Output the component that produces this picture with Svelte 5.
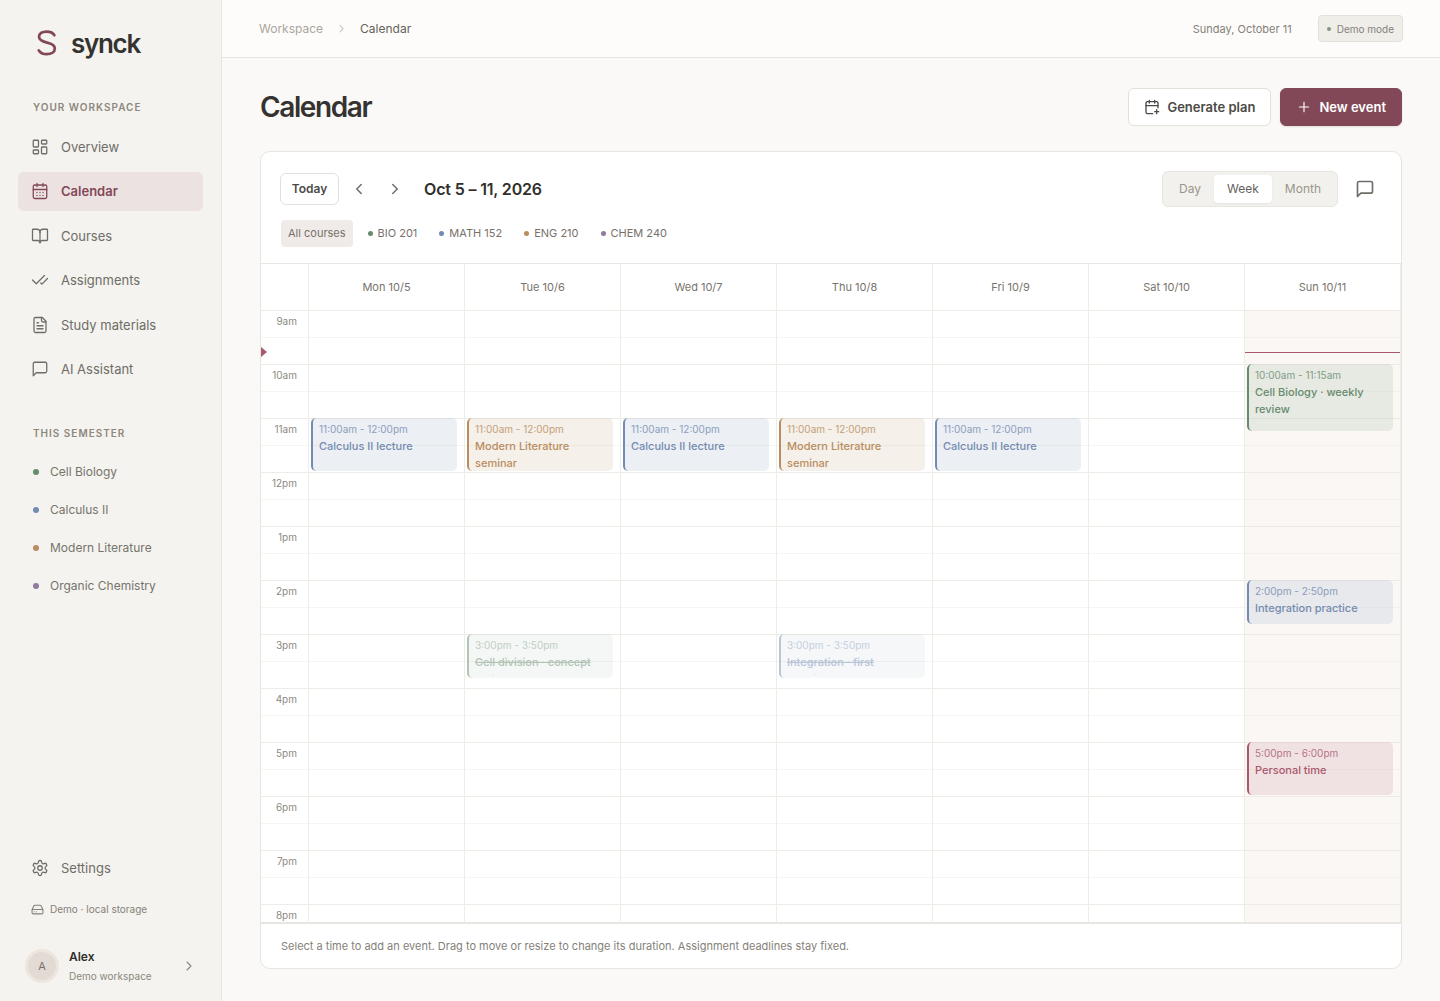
<script>
  const nav = [
    { label: 'Overview', icon: 'overview' },
    { label: 'Calendar', icon: 'calendar', active: true },
    { label: 'Courses', icon: 'book' },
    { label: 'Assignments', icon: 'checks' },
    { label: 'Study materials', icon: 'file' },
    { label: 'AI Assistant', icon: 'message' }
  ];

  const courses = [
    { name: 'Cell Biology', code: 'BIO 201', color: 'green' },
    { name: 'Calculus II', code: 'MATH 152', color: 'blue' },
    { name: 'Modern Literature', code: 'ENG 210', color: 'orange' },
    { name: 'Organic Chemistry', code: 'CHEM 240', color: 'purple' }
  ];

  const calculus = { start: 660, end: 720, time: '11:00am - 12:00pm', title: 'Calculus II lecture', color: 'blue' };
  const literature = { start: 660, end: 720, time: '11:00am - 12:00pm', title: 'Modern Literature seminar', color: 'orange' };

  const days = [
    { label: 'Mon 10/5', events: [calculus] },
    {
      label: 'Tue 10/6',
      events: [
        literature,
        { start: 900, end: 950, time: '3:00pm - 3:50pm', title: 'Cell division · concept review', color: 'green', done: true }
      ]
    },
    { label: 'Wed 10/7', events: [calculus] },
    {
      label: 'Thu 10/8',
      events: [
        literature,
        { start: 900, end: 950, time: '3:00pm - 3:50pm', title: 'Integration · first practice', color: 'blue', done: true }
      ]
    },
    { label: 'Fri 10/9', events: [calculus] },
    { label: 'Sat 10/10', events: [] },
    {
      label: 'Sun 10/11',
      today: true,
      events: [
        { start: 600, end: 675, time: '10:00am - 11:15am', title: 'Cell Biology · weekly review', color: 'green' },
        { start: 840, end: 890, time: '2:00pm - 2:50pm', title: 'Integration practice', color: 'blue' },
        { start: 1020, end: 1080, time: '5:00pm - 6:00pm', title: 'Personal time', color: 'red' }
      ]
    }
  ];

  const hours = ['9am', '10am', '11am', '12pm', '1pm', '2pm', '3pm', '4pm', '5pm', '6pm', '7pm', '8pm'];
  const views = ['Day', 'Week', 'Month'];
  const dayStart = 540;
  const now = 587;

  let view = $state('Week');
  let filter = $state('all');

  // 54px per hour
  function offset(minutes) {
    return Math.round(((minutes - dayStart) * 54) / 60);
  }

  function eventStyle(e) {
    return `top: ${offset(e.start)}px; height: ${offset(e.end) - offset(e.start) - 1}px`;
  }
</script>

{#snippet icon(name, size = 18, width = 1.7)}
  <svg width={size} height={size} viewBox="0 0 24 24" fill="none" stroke="currentColor" stroke-width={width} stroke-linecap="round" stroke-linejoin="round" aria-hidden="true">
    {#if name === 'overview'}
      <rect x="3" y="3" width="7" height="9" rx="1" />
      <rect x="14" y="3" width="7" height="5" rx="1" />
      <rect x="14" y="12" width="7" height="9" rx="1" />
      <rect x="3" y="16" width="7" height="5" rx="1" />
    {:else if name === 'calendar'}
      <rect x="3" y="4" width="18" height="18" rx="2" />
      <path d="M8 2v4M16 2v4M3 10h18M8 14h.01M12 14h.01M16 14h.01M8 18h.01M12 18h.01M16 18h.01" />
    {:else if name === 'book'}
      <path d="M12 7v14" />
      <path d="M3 18a1 1 0 0 1-1-1V4a1 1 0 0 1 1-1h5a4 4 0 0 1 4 4 4 4 0 0 1 4-4h5a1 1 0 0 1 1 1v13a1 1 0 0 1-1 1h-6a3 3 0 0 0-3 3 3 3 0 0 0-3-3z" />
    {:else if name === 'checks'}
      <path d="M18 6 7 17l-5-5M22 10l-7.500 7.500L13 16" />
    {:else if name === 'file'}
      <path d="M15 2H6a2 2 0 0 0-2 2v16a2 2 0 0 0 2 2h12a2 2 0 0 0 2-2V7Z" />
      <path d="M14 2v4a2 2 0 0 0 2 2h4M10 9H8M16 13H8M16 17H8" />
    {:else if name === 'message'}
      <path d="M21 15a2 2 0 0 1-2 2H7l-4 4V5a2 2 0 0 1 2-2h14a2 2 0 0 1 2 2z" />
    {:else if name === 'settings'}
      <path d="M12.220 2h-.44a2 2 0 0 0-2 2v.18a2 2 0 0 1-1 1.730l-.43.25a2 2 0 0 1-2 0l-.15-.08a2 2 0 0 0-2.730.73l-.22.38a2 2 0 0 0 .73 2.730l.15.1a2 2 0 0 1 1 1.720v.51a2 2 0 0 1-1 1.740l-.15.09a2 2 0 0 0-.73 2.730l.22.38a2 2 0 0 0 2.730.73l.15-.08a2 2 0 0 1 2 0l.43.25a2 2 0 0 1 1 1.730V20a2 2 0 0 0 2 2h.44a2 2 0 0 0 2-2v-.18a2 2 0 0 1 1-1.730l.43-.25a2 2 0 0 1 2 0l.15.08a2 2 0 0 0 2.730-.73l.22-.39a2 2 0 0 0-.73-2.730l-.15-.08a2 2 0 0 1-1-1.740v-.5a2 2 0 0 1 1-1.740l.15-.09a2 2 0 0 0 .73-2.730l-.22-.38a2 2 0 0 0-2.730-.73l-.15.08a2 2 0 0 1-2 0l-.43-.25a2 2 0 0 1-1-1.730V4a2 2 0 0 0-2-2z" />
      <circle cx="12" cy="12" r="3" />
    {:else if name === 'drive'}
      <path d="M22 12H2M5.450 5.110 2 12v6a2 2 0 0 0 2 2h16a2 2 0 0 0 2-2v-6l-3.450-6.890A2 2 0 0 0 16.760 4H7.240a2 2 0 0 0-1.790 1.110zM6 16h.01M10 16h.01" />
    {:else if name === 'plan'}
      <path d="M8 2v4M16 2v4M3 10h18M16 19h6M19 16v6" />
      <path d="M21 13V6a2 2 0 0 0-2-2H5a2 2 0 0 0-2 2v14a2 2 0 0 0 2 2h8" />
    {:else if name === 'plus'}
      <path d="M5 12h14M12 5v14" />
    {:else if name === 'left'}
      <path d="m15 18-6-6 6-6" />
    {:else if name === 'right'}
      <path d="m9 18 6-6-6-6" />
    {/if}
  </svg>
{/snippet}

<div class="app">
  <aside>
    <a class="brand" href="#home">
      <svg width="22" height="28" viewBox="0 0 24 30" fill="none" stroke="currentColor" stroke-width="3" stroke-linecap="round" aria-hidden="true">
        <path d="M20 6.500C18.500 3.500 15.500 2.500 11.500 2.500 6.500 2.500 3.300 4.700 3.300 8.300c0 3.900 3.700 5.200 8.700 6.200 5.200 1.100 8.500 2.600 8.500 6.400 0 4-3.700 6.300-8.700 6.300-4.200 0-7.200-1.300-8.800-4.200" />
      </svg>
      <span>synck</span>
    </a>

    <h2>Your workspace</h2>
    <nav class="main-nav">
      {#each nav as item}
        <a class="item" class:active={item.active} href="#{item.icon}">
          {@render icon(item.icon)}
          {item.label}
        </a>
      {/each}
    </nav>

    <h2 class="semester">This semester</h2>
    <nav>
      {#each courses as c}
        <a class="course {c.color}" href="#{c.name}"><i class="dot"></i>{c.name}</a>
      {/each}
    </nav>

    <div class="bottom">
      <a class="item" href="#settings">{@render icon('settings')}Settings</a>
      <p class="storage">{@render icon('drive', 13, 2)}Demo · local storage</p>
      <button class="profile">
        <span class="avatar">A</span>
        <span class="who"><strong>Alex</strong><small>Demo workspace</small></span>
        {@render icon('right', 16)}
      </button>
    </div>
  </aside>

  <div class="page">
    <header>
      <nav class="crumbs">
        <a href="#workspace">Workspace</a>
        {@render icon('right', 13)}
        <span>Calendar</span>
      </nav>
      <div class="status">
        <span>Sunday, October 11</span>
        <span class="badge"><i class="dot"></i>Demo mode</span>
      </div>
    </header>

    <main>
      <div class="heading">
        <h1>Calendar</h1>
        <div class="actions">
          <button class="btn">{@render icon('plan', 16, 2)}Generate plan</button>
          <button class="btn primary">{@render icon('plus', 16)}New event</button>
        </div>
      </div>

      <section class="card">
        <div class="toolbar">
          <button class="today">Today</button>
          <button class="arrow" aria-label="Previous week">{@render icon('left', 18, 2)}</button>
          <button class="arrow" aria-label="Next week">{@render icon('right', 18, 2)}</button>
          <h3>Oct 5 – 11, 2026</h3>
          <div class="views">
            {#each views as v}
              <button class:on={view === v} onclick={() => (view = v)}>{v}</button>
            {/each}
          </div>
          <button class="arrow" aria-label="Open chat">{@render icon('message', 20, 2)}</button>
        </div>

        <div class="filters">
          <button class:on={filter === 'all'} onclick={() => (filter = 'all')}>All courses</button>
          {#each courses as c}
            <button class={c.color} class:on={filter === c.code} onclick={() => (filter = c.code)}>
              <i class="dot"></i>{c.code}
            </button>
          {/each}
        </div>

        <div class="week head">
          <div></div>
          {#each days as day}
            <div>{day.label}</div>
          {/each}
        </div>

        <div class="week body">
          <div class="axis">
            {#each hours as hour}
              <div>{hour}</div>
            {/each}
            <i class="now-arrow" style="top: {offset(now) - 5}px"></i>
          </div>
          {#each days as day}
            <div class="day" class:current={day.today}>
              {#if day.today}
                <i class="now" style="top: {offset(now)}px"></i>
              {/if}
              {#each day.events as e}
                <article class="event {e.color}" class:done={e.done} style={eventStyle(e)}>
                  <time>{e.time}</time>
                  <b>{e.title}</b>
                </article>
              {/each}
            </div>
          {/each}
        </div>

        <footer>Select a time to add an event. Drag to move or resize to change its duration. Assignment deadlines stay fixed.</footer>
      </section>
    </main>
  </div>
</div>

<style>
  :global(body) {
    margin: 0;
    background: #faf9f7;
  }
  .app {
    display: grid;
    grid-template-columns: 222px 1fr;
    min-height: 100vh;
    font-family: Inter, "Liberation Sans", sans-serif;
    font-size: 13px;
    line-height: 20px;
    color: #6f6d67;
  }
  .app, .app :global(*) { box-sizing: border-box; }
  a { color: inherit; text-decoration: none; }
  h1, h2, h3, p { margin: 0; }
  button {
    font: inherit;
    color: inherit;
    background: none;
    border: 0;
    padding: 0;
    cursor: pointer;
  }
  svg { flex: none; }

  .green { --c: #668b6e; --bg: rgba(102, 139, 110, 0.13); }
  .blue { --c: #738bb0; --bg: rgba(105, 137, 175, 0.13); }
  .orange { --c: #b98d5f; --bg: rgba(180, 140, 85, 0.13); }
  .purple { --c: #92799f; --bg: rgba(146, 121, 159, 0.13); }
  .red { --c: #a9586c; --bg: rgba(169, 85, 107, 0.13); }
  .dot {
    flex: none;
    width: 6px;
    height: 6px;
    border-radius: 50%;
    background: var(--c);
  }

  aside {
    display: flex;
    flex-direction: column;
    padding: 28px 18px 11px;
    background: #f4f3ef;
    border-right: 1px solid #e7e5df;
  }
  .brand {
    display: flex;
    align-items: center;
    gap: 13px;
    height: 30px;
    padding-left: 18px;
    color: #824858;
  }
  .brand span {
    padding-top: 2px;
    font-size: 26px;
    font-weight: 600;
    letter-spacing: -0.05em;
    color: #343331;
  }
  h2 {
    margin: 39px 15px 0;
    font-size: 10px;
    font-weight: 600;
    letter-spacing: 1px;
    text-transform: uppercase;
    color: #8d877c;
  }
  h2.semester { margin: 34px 15px 10px; }
  .main-nav {
    display: flex;
    flex-direction: column;
    justify-content: space-between;
    min-height: 262px;
    margin-top: 10px;
  }
  .item {
    display: flex;
    align-items: center;
    gap: 12px;
    height: 39px;
    padding: 0 13px;
    border-radius: 6px;
  }
  .item.active {
    background: #ebe2e1;
    color: #824858;
    font-weight: 600;
  }
  .course {
    display: flex;
    align-items: center;
    gap: 11px;
    height: 38px;
    padding-left: 15px;
    font-size: 12px;
    color: #77746d;
  }
  .bottom { margin-top: auto; }
  .storage {
    display: flex;
    align-items: center;
    gap: 6px;
    margin: 12px 0 23px 13px;
    font-size: 10px;
    color: #858178;
  }
  .profile {
    display: flex;
    align-items: center;
    gap: 10px;
    width: 100%;
    height: 48px;
    padding: 0 6px 0 7px;
    text-align: left;
    color: #8d877c;
  }
  .avatar {
    display: grid;
    place-items: center;
    width: 34px;
    height: 34px;
    border: 3px solid #ede6df;
    border-radius: 50%;
    background: #e3dad3;
    font-size: 11px;
    color: #77716a;
  }
  .who { flex: 1; }
  .who strong, .who small { display: block; }
  .who strong {
    font-size: 12px;
    font-weight: 600;
    color: #302f2d;
  }
  .who small { font-size: 10px; line-height: 18px; }

  header {
    display: flex;
    align-items: center;
    justify-content: space-between;
    height: 58px;
    padding: 0 37px;
    background: #fdfcfa;
    border-bottom: 1px solid #e7e5df;
  }
  .crumbs, .status {
    display: flex;
    align-items: center;
    gap: 12px;
    font-size: 12px;
    color: #aaa69d;
  }
  .crumbs span { color: #65625c; }
  .status {
    gap: 26px;
    font-size: 11px;
    color: #858178;
  }
  .badge {
    --c: #81997f;
    display: flex;
    align-items: center;
    gap: 6px;
    height: 27px;
    padding: 0 8px;
    border: 1px solid #e3e0d9;
    border-radius: 4px;
    background: #efeee9;
    font-size: 10px;
  }
  .badge .dot { width: 4px; height: 4px; }

  main { padding: 30px 38px 32px; }
  .heading {
    display: flex;
    align-items: center;
    justify-content: space-between;
    height: 38px;
    margin-bottom: 25px;
  }
  h1 {
    font-size: 28px;
    font-weight: 600;
    line-height: 38px;
    letter-spacing: -0.05em;
    color: #343331;
  }
  .actions { display: flex; gap: 9px; }
  .btn {
    display: flex;
    align-items: center;
    gap: 7px;
    height: 38px;
    padding: 0 15px;
    border: 1px solid #e3e0da;
    border-radius: 6px;
    background: #fff;
    font-weight: 600;
    color: #4c4a46;
  }
  .btn.primary {
    border-color: #824858;
    background: #824858;
    color: #fff;
    box-shadow: 0 1px 2px rgba(60, 30, 40, 0.12);
  }

  .card {
    border: 1px solid #e7e5df;
    border-radius: 10px;
    background: #fff;
    overflow: hidden;
  }
  .toolbar {
    display: flex;
    align-items: center;
    padding: 19px 18px 0 19px;
    height: 55px;
  }
  .today {
    width: 59px;
    height: 32px;
    margin-right: 2px;
    border: 1px solid #e3e0da;
    border-radius: 6px;
    font-size: 12px;
    font-weight: 600;
    color: #4c4a46;
  }
  .arrow {
    display: grid;
    place-items: center;
    width: 36px;
    height: 36px;
  }
  h3 {
    margin: 0 auto 0 11px;
    font-size: 16px;
    font-weight: 600;
    letter-spacing: -0.01em;
    color: #302f2d;
  }
  .views {
    display: flex;
    padding: 3px;
    margin-right: 9px;
    border: 1px solid #e7e5df;
    border-radius: 6px;
    background: #f2f1ed;
    font-size: 12px;
    color: #9a958b;
  }
  .views button {
    height: 28px;
    padding: 0 13px;
    border-radius: 4px;
  }
  .views .on {
    background: #fff;
    color: #65625c;
    box-shadow: 0 1px 2px rgba(0, 0, 0, 0.06);
  }
  .filters {
    display: flex;
    gap: 8px;
    padding: 13px 20px 16px;
    font-size: 11px;
    color: #77716a;
  }
  .filters button {
    display: flex;
    align-items: center;
    gap: 5px;
    height: 27px;
    padding: 0 7px 1px;
    border-radius: 4px;
  }
  .filters .dot { width: 5px; height: 5px; }
  .filters .on { background: #f0eae8; }

  .week {
    display: grid;
    grid-template-columns: 48px repeat(7, 1fr);
  }
  .week > div { border-right: 1px solid #eeece7; }
  .head {
    height: 47px;
    border-top: 1px solid #e9e7e1;
    font-size: 11px;
    line-height: 46px;
    text-align: center;
    color: #77746d;
  }
  .body {
    height: 613px;
    overflow: hidden;
    border-bottom: 1px solid #e9e7e1;
    background: repeating-linear-gradient(#eeece6 0 1px, transparent 1px 27px, #f6f5f1 27px 28px, transparent 28px 54px);
  }
  .axis, .day { position: relative; }
  .axis div {
    height: 54px;
    padding: 1px 11px 0 0;
    font-size: 10px;
    text-align: right;
    color: #8d897f;
  }
  .now-arrow {
    position: absolute;
    left: 0;
    border: 5px solid transparent;
    border-left: 6px solid #a9586c;
    border-right: 0;
  }
  .day.current { background: rgba(243, 232, 225, 0.35); }
  .now {
    position: absolute;
    left: 0;
    right: 0;
    height: 1px;
    background: #a9586c;
  }
  .event {
    position: absolute;
    left: 2px;
    right: 7px;
    display: flex;
    flex-direction: column;
    padding: 3px 6px;
    border-left: 2px solid var(--c);
    border-radius: 5px;
    background: var(--bg);
    color: var(--c);
    overflow: hidden;
  }
  .event time {
    flex: none;
    font-size: 10px;
    line-height: 17px;
    opacity: 0.8;
  }
  .event b {
    min-height: 0;
    overflow: hidden;
    font-size: 11px;
    font-weight: 500;
    line-height: 17px;
  }
  .event.done { opacity: 0.5; }
  .event.done b { text-decoration: line-through; }

  footer {
    padding: 12px 20px;
    border-top: 1px solid #e7e5df;
    font-size: 11px;
    color: #858178;
  }
</style>
